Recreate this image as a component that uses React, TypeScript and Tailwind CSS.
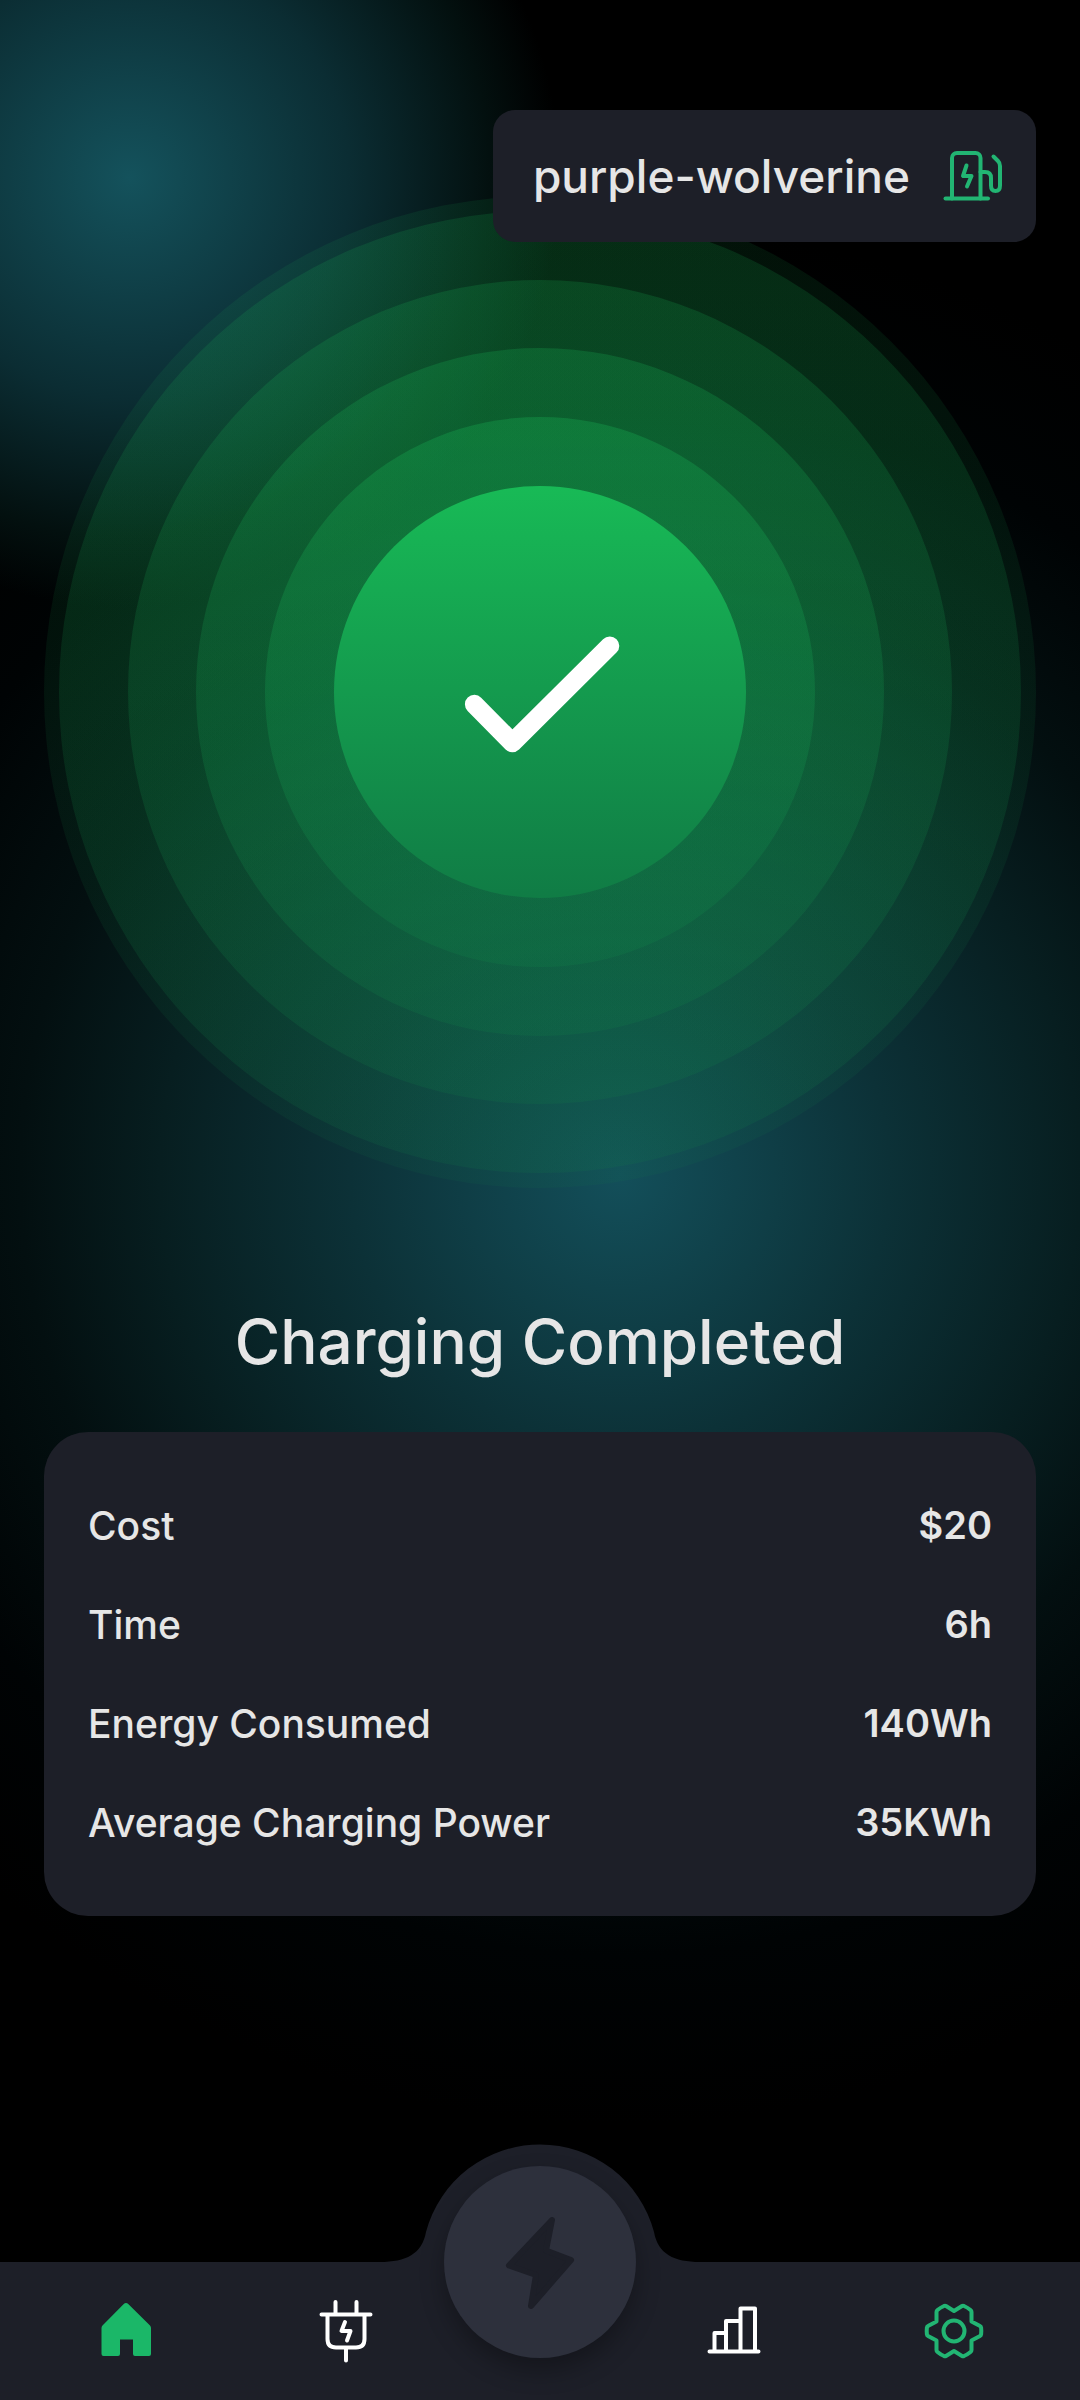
import type { ReactNode } from "react";

const stats = [
  { label: "Cost", value: "$20" },
  { label: "Time", value: "6h" },
  { label: "Energy Consumed", value: "140Wh" },
  { label: "Average Charging Power", value: "35KWh" },
];

function StationIcon() {
  return (
    <svg width="60" height="52" viewBox="0 0 60 52" fill="none" stroke="#22b573" strokeWidth="4" strokeLinecap="round" strokeLinejoin="round" aria-hidden="true">
      <path d="M10 48.5V8a5 5 0 0 1 5-5h18.500a5 5 0 0 1 5 5v40.500" />
      <path d="M3.500 48.500H46" />
      <path d="M38.500 22h4.500q6 0 6 6v7.500q0 5.500 4.500 5.500t4.500-5.500V16q0-3-2-5l-4.500-4.500" />
      <path d="M24.500 15.500L21 26h8.500L25 36.500" />
    </svg>
  );
}

function HomeIcon() {
  return (
    <svg width="64" height="64" viewBox="0 0 64 64" fill="#1bb768" aria-hidden="true">
      <path d="M29.500 5.200q2.500-2.400 5 0L56 26.500q1 1 1 2.500v26q0 2-2 2H41q-2 0-2-2V40.500H26V55q0 2-2 2H9.500q-2 0-2-2V29q0-1.500 1-2.500Z" />
    </svg>
  );
}

function PlugIcon() {
  return (
    <svg width="64" height="64" viewBox="0 0 64 64" fill="none" stroke="#fff" strokeWidth="4" strokeLinecap="round" strokeLinejoin="round" aria-hidden="true">
      <path d="M7.500 15.500h49M21.500 3v12M42.500 3v12M32 49v12.500" />
      <path d="M13.500 16v24q0 8.500 8.500 8.500h20q8.500 0 8.500-8.500V16" />
      <path d="M31 23L27.500 32h9L33 41.500" />
    </svg>
  );
}

function ChartIcon() {
  return (
    <svg width="64" height="64" viewBox="0 0 64 64" fill="none" stroke="#fff" strokeWidth="4" strokeLinecap="round" strokeLinejoin="round" aria-hidden="true">
      <path d="M7.500 52.500h49M12.500 52V34h11.500M24 52V22h14.500M38.500 52V9.500h14.500V52" />
    </svg>
  );
}

function GearIcon() {
  return (
    <svg width="64" height="64" viewBox="0 0 64 64" fill="none" stroke="#22b573" strokeWidth="4" strokeLinecap="round" strokeLinejoin="round" aria-hidden="true">
      <circle cx="32" cy="32" r="10.500" />
      <path d="M32 12l8-5q1-.6 2 0q3.500 1.500 6.500 4q1 .8 1 2v9.500l8.500 4.500q1 .5 1.100 1.600q.4 3.400 0 6.800q-.1 1.100-1.100 1.600l-8.500 4.500V51q0 1.200-1 2q-3 2.500-6.500 4q-1 .6-2 0l-8-5l-8 5q-1 .6-2 0q-3.500-1.500-6.500-4q-1-.8-1-2v-9.500L6 37q-1-.5-1.100-1.600q-.4-3.400 0-6.800Q5 27.500 6 27l8.500-4.500V13q0-1.200 1-2q3-2.500 6.500-4q1-.6 2 0Z" />
    </svg>
  );
}

function NavButton({ label, children }: { label: string; children: ReactNode }) {
  return (
    <button type="button" aria-label={label} className="flex h-full items-center justify-center">
      {children}
    </button>
  );
}

function StatusRings() {
  const ring = "col-start-1 row-start-1 aspect-square rounded-full bg-linear-to-b from-[#18ba56] to-[#107c45]";
  return (
    <div className="grid aspect-square w-full place-items-center">
      <div className={`${ring} w-full opacity-[0.1]`} />
      <div className={`${ring} w-[97%] opacity-[0.16]`} />
      <div className={`${ring} w-[83.1%] opacity-[0.19]`} />
      <div className={`${ring} w-[69.3%] opacity-[0.23]`} />
      <div className={`${ring} w-[55.4%] opacity-[0.29]`} />
      <div className={`${ring} z-1 grid w-[41.5%] place-items-center`}>
        <svg viewBox="0 0 412 412" className="w-full" fill="none" stroke="#fff" strokeWidth="19" strokeLinecap="round" strokeLinejoin="round" role="img" aria-label="Completed">
          <path d="M140.500 218.500L178.500 257L276 160" />
        </svg>
      </div>
    </div>
  );
}

function BottomNav() {
  return (
    <nav className="relative mt-auto h-[138px] bg-[#1d1f28]" aria-label="Main">
      <svg width="320" height="119" viewBox="0 0 320 119" className="absolute -top-[118px] left-1/2 -translate-x-1/2" fill="#1d1f28" aria-hidden="true">
        <path d="M0 118C26 118 42 110 46 88A118 118 0 0 1 274 88C278 110 294 118 320 118V119H0Z" />
      </svg>
      <div className="grid h-full grid-cols-[1fr_1fr_168px_1fr_1fr] px-4">
        <NavButton label="Home"><HomeIcon /></NavButton>
        <NavButton label="Chargers"><PlugIcon /></NavButton>
        <span />
        <NavButton label="Statistics"><ChartIcon /></NavButton>
        <NavButton label="Settings"><GearIcon /></NavButton>
      </div>
      <button
        type="button"
        aria-label="Charge"
        className="absolute -top-24 left-1/2 flex size-48 -translate-x-1/2 items-center justify-center rounded-full bg-[#2d303c] shadow-[0_12px_24px_rgba(0,0,0,0.3)]"
      >
        <svg width="96" height="112" viewBox="0 0 96 112" fill="#1d1f28" stroke="#1d1f28" strokeWidth="6" strokeLinejoin="round" aria-hidden="true">
          <path d="M60 14L17 59.500L44 69L39 100L79 54L54 44.500Z" />
        </svg>
      </button>
    </nav>
  );
}

export default function App() {
  return (
    <div className="flex min-h-screen flex-col bg-black bg-[radial-gradient(circle_at_130px_178px,#14525c_0px,#0b2d33_220px,#03100f_360px,transparent_430px),radial-gradient(circle_at_620px_1175px,#134f5a_0px,#0c3137_270px,#071e20_460px,#030f10_600px,#000304_780px,#000000_950px)] font-['Inter',sans-serif] text-[#e6e6e6]">
      <main className="flex flex-col px-11 pt-[110px] pb-24">
        <div className="relative z-10 flex h-[132px] items-center gap-8 self-end rounded-[22px] bg-[#1d1f28] pr-[34px] pl-10">
          <span className="text-[46px] leading-[56px] font-medium">purple-wolverine</span>
          <StationIcon />
        </div>
        <div className="-mt-[46px]">
          <StatusRings />
        </div>
        <h1 className="mt-[114px] text-center text-[62px] leading-[80px] font-medium">Charging Completed</h1>
        <dl className="mt-[50px] flex flex-col gap-12 rounded-[44px] bg-[#1d1f28] px-11 py-[68px]">
          {stats.map((s) => (
            <div key={s.label} className="flex items-center justify-between leading-[51px]">
              <dt className="text-[39px] font-medium">{s.label}</dt>
              <dd className="text-[38px] font-semibold">{s.value}</dd>
            </div>
          ))}
        </dl>
      </main>
      <BottomNav />
    </div>
  );
}
